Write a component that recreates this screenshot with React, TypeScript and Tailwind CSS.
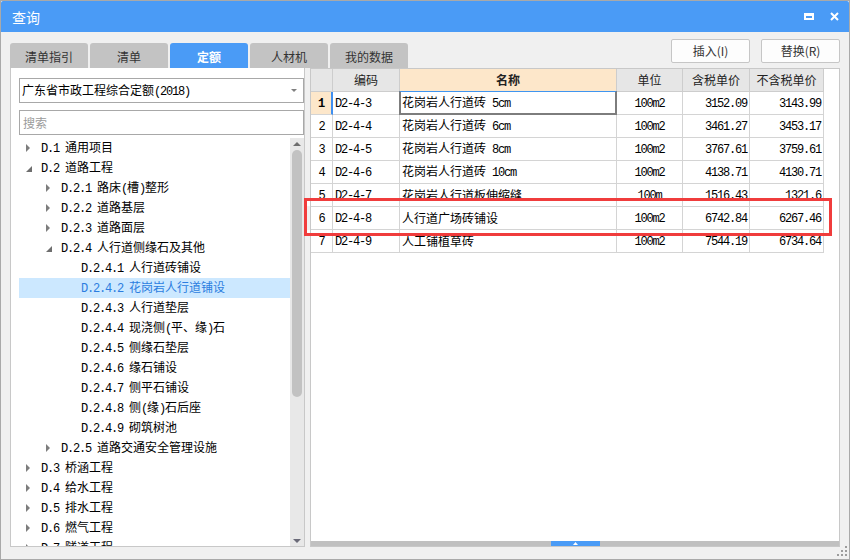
import React from "react";

const mono = "font-['Liberation_Mono',monospace] text-[12px] tracking-[-1.2px]";

// ascii runs in a SimSun-like mono face, the rest in the CJK face
function Txt({ s }: { s: string }) {
  const parts = s.split(/([\x20-\x7e]+)/).filter((p) => p !== "");
  return (
    <span className="whitespace-pre">
      {parts.map((p, i) =>
        /^[\x20-\x7e]+$/.test(p) ? (
          <span key={i} className={mono}>
            {p}
          </span>
        ) : (
          <span key={i}>{p}</span>
        )
      )}
    </span>
  );
}

const tabs = ["清单指引", "清单", "定额", "人材机", "我的数据"];

type Node = { l: number; t: string; a?: "c" | "e"; sel?: boolean };

const tree: Node[] = [
  { l: 0, t: "D.1 通用项目", a: "c" },
  { l: 0, t: "D.2 道路工程", a: "e" },
  { l: 1, t: "D.2.1 路床(槽)整形", a: "c" },
  { l: 1, t: "D.2.2 道路基层", a: "c" },
  { l: 1, t: "D.2.3 道路面层", a: "c" },
  { l: 1, t: "D.2.4 人行道侧缘石及其他", a: "e" },
  { l: 2, t: "D.2.4.1 人行道砖铺设" },
  { l: 2, t: "D.2.4.2 花岗岩人行道铺设", sel: true },
  { l: 2, t: "D.2.4.3 人行道垫层" },
  { l: 2, t: "D.2.4.4 现浇侧(平、缘)石" },
  { l: 2, t: "D.2.4.5 侧缘石垫层" },
  { l: 2, t: "D.2.4.6 缘石铺设" },
  { l: 2, t: "D.2.4.7 侧平石铺设" },
  { l: 2, t: "D.2.4.8 侧(缘)石后座" },
  { l: 2, t: "D.2.4.9 砌筑树池" },
  { l: 1, t: "D.2.5 道路交通安全管理设施", a: "c" },
  { l: 0, t: "D.3 桥涵工程", a: "c" },
  { l: 0, t: "D.4 给水工程", a: "c" },
  { l: 0, t: "D.5 排水工程", a: "c" },
  { l: 0, t: "D.6 燃气工程", a: "c" },
  { l: 0, t: "D.7 隧道工程", a: "c" },
];

const indent = ["w-0", "w-[20px]", "w-[40px]"];

const colW = ["w-[22px]", "w-[67px]", "w-[217px]", "w-[66px]", "w-[67px]", "w-[74px]"];
const headers = ["", "编码", "名称", "单位", "含税单价", "不含税单价"];
const align = [
  "justify-center",
  "pl-[2px]",
  "pl-[2px]",
  "justify-center",
  "justify-end pr-[2px]",
  "justify-end pr-[2px]",
];

const rows = [
  ["D2-4-3", "花岗岩人行道砖 5cm", "100m2", "3152.09", "3143.99"],
  ["D2-4-4", "花岗岩人行道砖 6cm", "100m2", "3461.27", "3453.17"],
  ["D2-4-5", "花岗岩人行道砖 8cm", "100m2", "3767.61", "3759.61"],
  ["D2-4-6", "花岗岩人行道砖 10cm", "100m2", "4138.71", "4130.71"],
  ["D2-4-7", "花岗岩人行道板伸缩缝", "100m", "1516.43", "1321.6"],
  ["D2-4-8", "人行道广场砖铺设", "100m2", "6742.84", "6267.46"],
  ["D2-4-9", "人工铺植草砖", "100m2", "7544.19", "6734.64"],
];

function Arrow({ a }: { a?: "c" | "e" }) {
  if (a === "c")
    return (
      <svg width="5" height="8" viewBox="0 0 5 8">
        <path d="M0 0L4 4L0 8Z" fill="#7d7d7d" />
      </svg>
    );
  if (a === "e")
    return (
      <svg width="7" height="7" viewBox="0 0 7 7" className="mt-[2px]">
        <path d="M6 0V6H0Z" fill="#6e6e6e" />
      </svg>
    );
  return null;
}

function GridStrip({ h }: { h: string }) {
  return (
    <div className={`flex ${h} bg-white`}>
      <div className="w-[4px] border-r border-[#c8c8c8]" />
      {colW.map((w, i) => (
        <div key={i} className={`${w} border-r border-[#d4d4d4]`} />
      ))}
    </div>
  );
}

export default function App() {
  return (
    <div className="relative flex h-[560px] w-[850px] flex-col border border-[#a9a9a9] bg-[#f0f0f0] font-['Noto_Sans_CJK_SC',sans-serif] text-[12px] leading-none text-black">
      {/* Title bar */}
      <div className="flex h-[31px] shrink-0 items-center rounded-t-[2px] bg-[#4a9bf6] pl-[11px] pr-[10px] text-white">
        <span className="text-[14px]">查询</span>
        <div className="ml-auto flex items-center gap-[16px]">
          <svg width="10" height="7" viewBox="0 0 10 7">
            <path d="M0 0H10V7H0Z M2 3H8V5H2Z" fill="#fff" fillRule="evenodd" />
          </svg>
          <svg width="9" height="9" viewBox="0 0 9 9">
            <path d="M1 1L8 8M8 1L1 8" stroke="#fff" strokeWidth="2" />
          </svg>
        </div>
      </div>

      <div className="relative flex flex-1 flex-col px-[9px]">
        {/* Tabs + buttons */}
        <div className="flex h-[36px] shrink-0 justify-between">
          <div className="mt-[11px] flex gap-[2px]">
            {tabs.map((t) => (
              <div
                key={t}
                className={`flex h-[25px] w-[78px] items-center justify-center rounded-t-[3px] pt-[3px] ${
                  t === "定额" ? "bg-[#4a9bf6] font-bold text-white" : "bg-[#c3c3c3] text-[#333]"
                }`}
              >
                {t}
              </div>
            ))}
          </div>
          <div className="mt-[7px] flex gap-[11px]">
            {["插入(I)", "替换(R)"].map((b) => (
              <button
                key={b}
                className="flex h-[24px] w-[79px] items-center justify-center rounded-[2px] border border-[#c6c6c6] bg-[#fdfdfd] text-[12px] text-[#333]"
              >
                {b}
              </button>
            ))}
          </div>
        </div>

        {/* Panels */}
        <div className="flex h-[479px] shrink-0">
          {/* Left: tree */}
          <div className="flex w-[295px] flex-col border-x border-b border-[#c8c8c8] bg-white pl-[8px]">
            <div className="mt-[10px] flex h-[25px] shrink-0 items-center border border-[#a8a8a8] pl-[2px]">
              <Txt s="广东省市政工程综合定额(2018)" />
              <svg className="ml-auto mr-[6px]" width="6" height="3" viewBox="0 0 6 3">
                <path d="M0 0H6L3 3Z" fill="#808080" />
              </svg>
            </div>
            <input
              placeholder="搜索"
              className="mt-[7px] h-[25px] w-full shrink-0 border border-[#a8a8a8] px-[3px] text-[12px] outline-none placeholder:text-[#9b9b9b]"
            />
            <div className="mt-[3px] flex min-h-0 flex-1">
              <div className="flex-1 overflow-hidden">
                {tree.map((n) => (
                  <div
                    key={n.t}
                    className={`flex h-[20px] items-center ${
                      n.sel ? "bg-[#cce8ff] text-[#2b7de0]" : "text-black"
                    }`}
                  >
                    <div className={`${indent[n.l]} shrink-0`} />
                    <div className="flex w-[22px] shrink-0 items-center pl-[7px]">
                      <Arrow a={n.a} />
                    </div>
                    <Txt s={n.t} />
                  </div>
                ))}
              </div>
              <div className="flex w-[14px] flex-col bg-[#e8e8e8]">
                <div className="flex h-[12px] justify-center pt-[4px]">
                  <svg width="8" height="4" viewBox="0 0 8 4">
                    <path d="M0 4L4 0L8 4Z" fill="#6e6e6e" />
                  </svg>
                </div>
                <div className="mx-[2px] h-[247px] rounded-[5px] bg-[#c2c2c2]" />
                <div className="flex flex-1 items-end justify-center pb-[3px]">
                  <svg width="8" height="4" viewBox="0 0 8 4">
                    <path d="M0 0L4 4L8 0Z" fill="#6a6a78" />
                  </svg>
                </div>
              </div>
            </div>
          </div>

          <div className="w-[5px]" />

          {/* Right: table */}
          <div className="flex w-[530px] flex-col border border-[#c8c8c8] bg-white">
            <div className="flex-1">
              <div className="flex h-[23px]">
                {headers.map((h, i) => (
                  <div
                    key={i}
                    className={`${colW[i]} flex items-center justify-center border-r border-b border-[#cdcdcd] text-[#222] ${
                      i === 2 ? "bg-[#fde7ca] font-bold" : "bg-[#e6e6e6]"
                    }`}
                  >
                    {h}
                  </div>
                ))}
              </div>
              {rows.map((r, ri) => (
                <div key={ri} className="flex h-[23px]">
                  {[String(ri + 1), ...r].map((c, ci) => {
                    const first = ri === 0;
                    let extra = "";
                    if (ci === 0 && first) extra = "bg-[#fde7ca] font-bold border-r-2 border-r-[#3f8ff0]";
                    return (
                      <div
                        key={ci}
                        className={`relative ${colW[ci]} flex items-center border-r border-b border-[#d4d4d4] ${align[ci]} ${extra}`}
                      >
                        <Txt s={c} />
                        {first && ci === 2 && (
                          <div className="absolute top-[-1px] left-[-1px] right-[-1px] bottom-[-1px] border-t border-l-2 border-r-2 border-b-2 border-[#7d7d7d] border-t-[#4095f0]" />
                        )}
                      </div>
                    );
                  })}
                </div>
              ))}
            </div>
            <div className="flex h-[5px] shrink-0 justify-center bg-[#c0c0c0]">
              <div className="flex w-[49px] items-center justify-center bg-[#4a9bf6]">
                <svg width="5" height="3" viewBox="0 0 5 3">
                  <path d="M0 3L2.5 0L5 3Z" fill="#fff" />
                </svg>
              </div>
            </div>
          </div>
        </div>

        {/* red highlight around row 6 */}
        <div className="absolute top-[166px] left-[303px] flex h-[38px] w-[528px] flex-col overflow-hidden border-[3px] border-[#f03c3c]">
          <GridStrip h="h-[5px]" />
          <div className="h-[24px]" />
          <GridStrip h="h-[3px]" />
        </div>
      </div>

      {/* resize grip */}
      <svg className="absolute right-[2px] bottom-[3px]" width="10" height="10" viewBox="0 0 10 10">
        <g fill="#9c9c9c">
          <rect x="8" y="0" width="2" height="2" />
          <rect x="8" y="4" width="2" height="2" />
          <rect x="4" y="4" width="2" height="2" />
          <rect x="0" y="8" width="2" height="2" />
          <rect x="4" y="8" width="2" height="2" />
          <rect x="8" y="8" width="2" height="2" />
        </g>
      </svg>
    </div>
  );
}
